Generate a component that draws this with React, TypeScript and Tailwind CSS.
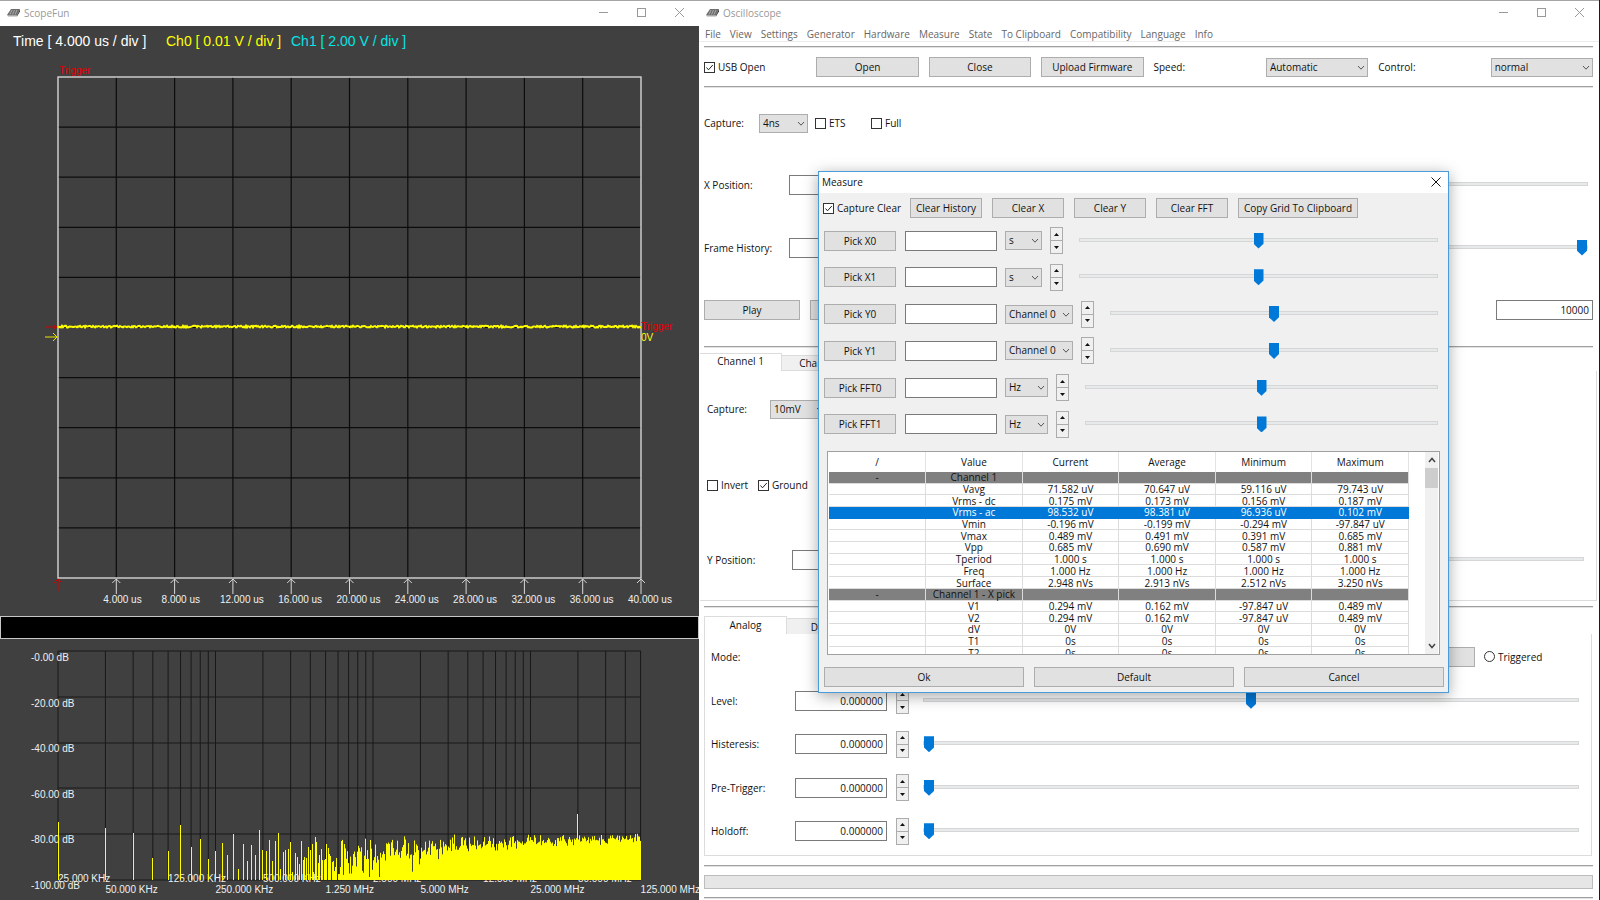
import type { ReactNode } from "react";

const MENU = ["File", "View", "Settings", "Generator", "Hardware", "Measure", "State", "To Clipboard", "Compatibility", "Language", "Info"];

const PICKS = [
  { name: "X0", units: ["s", "ms"], width: "w-[37px]" },
  { name: "X1", units: ["s", "ms"], width: "w-[37px]" },
  { name: "Y0", units: ["Channel 0", "Channel 1"], width: "w-[68px]" },
  { name: "Y1", units: ["Channel 0", "Channel 1"], width: "w-[68px]" },
  { name: "FFT0", units: ["Hz", "KHz"], width: "w-[43px]" },
  { name: "FFT1", units: ["Hz", "KHz"], width: "w-[43px]" },
];

const ROWS = [
  ["-", "Channel 1", "", "", "", ""],
  ["", "Vavg", "71.582 uV", "70.647 uV", "59.116 uV", "79.743 uV"],
  ["", "Vrms - dc", "0.175 mV", "0.173 mV", "0.156 mV", "0.187 mV"],
  ["", "Vrms - ac", "98.532 uV", "98.381 uV", "96.936 uV", "0.102 mV"],
  ["", "Vmin", "-0.196 mV", "-0.199 mV", "-0.294 mV", "-97.847 uV"],
  ["", "Vmax", "0.489 mV", "0.491 mV", "0.391 mV", "0.685 mV"],
  ["", "Vpp", "0.685 mV", "0.690 mV", "0.587 mV", "0.881 mV"],
  ["", "Tperiod", "1.000 s", "1.000 s", "1.000 s", "1.000 s"],
  ["", "Freq", "1.000 Hz", "1.000 Hz", "1.000 Hz", "1.000 Hz"],
  ["", "Surface", "2.948 nVs", "2.913 nVs", "2.512 nVs", "3.250 nVs"],
  ["-", "Channel 1 - X pick", "", "", "", ""],
  ["", "V1", "0.294 mV", "0.162 mV", "-97.847 uV", "0.489 mV"],
  ["", "V2", "0.294 mV", "0.162 mV", "-97.847 uV", "0.489 mV"],
  ["", "dV", "0V", "0V", "0V", "0V"],
  ["", "T1", "0s", "0s", "0s", "0s"],
  ["", "T2", "0s", "0s", "0s", "0s"],
];

const SELECTED_ROW = 3;

// pseudo random numbers with a fixed seed, so the noise is the same on every render
const makeRandom = (seed: number) => () => {
  seed = (seed * 1664525 + 1013904223) % 4294967296;
  return seed / 4294967296;
};

const LogoIcon = () => (
  <svg width="14" height="10" viewBox="0 0 14 10" aria-hidden="true">
    <path d="M4 1 L13 1 L10 7 L0 7 Z" fill="#6f6f6f" />
    <path d="M0 7 L10 7 L10 8.500 L1 8.500 Z" fill="#a9a9a9" />
    <path d="M10 7 L13 1 L13 3.500 L10 8.500 Z" fill="#3f3f3f" />
    <path d="M5 2 L3 6.500 M7.500 2 L5.500 6.500 M10 2 L8 6.500" stroke="#b9b9b9" strokeWidth="0.800" />
  </svg>
);

const TitleBar = ({ title }: { title: string }) => (
  <header className="flex h-[26px] items-center border-t border-[#a5a5a5] bg-white pb-[2px] pl-[7px] pr-[14px] text-[#999]">
    <LogoIcon />
    <h1 className="ml-[3px] flex-1">{title}</h1>
    <div className="flex gap-[27px]">
      <button aria-label="Minimize">
        <svg width="11" height="11" viewBox="0 0 11 11"><path d="M1 5.500H10" stroke="#999" /></svg>
      </button>
      <button aria-label="Maximize">
        <svg width="11" height="11" viewBox="0 0 11 11"><rect x="1.500" y="1.500" width="8" height="8" fill="none" stroke="#999" /></svg>
      </button>
      <button aria-label="Close">
        <svg width="11" height="11" viewBox="0 0 11 11"><path d="M1 1L10 10M10 1L1 10" stroke="#999" /></svg>
      </button>
    </div>
  </header>
);

const Button = ({ children, label, className = "" }: { children?: ReactNode; label?: string; className?: string }) => (
  <button aria-label={label} className={`h-5 border border-[#adadad] bg-[#e1e1e1] text-center leading-[16px] hover:border-[#0078d7] ${className}`}>
    {children}
  </button>
);

const Select = ({ label, options, className = "" }: { label: string; options: string[]; className?: string }) => (
  <span className={`relative block shrink-0 ${className}`}>
    <select aria-label={label} className="h-[19px] w-full appearance-none border border-[#adadad] bg-[#e1e1e1] pl-[3px] leading-[15px]">
      {options.map((o) => <option key={o}>{o}</option>)}
    </select>
    <svg className="pointer-events-none absolute right-[3px] top-[7px]" width="8" height="6" viewBox="0 0 8 6">
      <path d="M1 1L4 4.200L7 1" fill="none" stroke="#555" />
    </svg>
  </span>
);

const Checkbox = ({ label, checked = false }: { label: string; checked?: boolean }) => (
  <label className="flex items-center gap-[3px] whitespace-nowrap">
    <span className="relative block size-[11px]">
      <input type="checkbox" defaultChecked={checked} className="peer block size-[11px] appearance-none border border-[#333] bg-white" />
      <svg className="pointer-events-none absolute left-0 top-0 hidden peer-checked:block" width="11" height="11" viewBox="0 0 11 11">
        <path d="M2.500 5.500L4.500 7.800L8.800 3" fill="none" stroke="#222" />
      </svg>
    </span>
    {label}
  </label>
);

const TextBox = ({ label, value = "", className = "w-[92px]" }: { label: string; value?: string; className?: string }) => (
  <input
    type="text"
    aria-label={label}
    defaultValue={value}
    className={`h-5 shrink-0 border border-[#7a7a7a] bg-white pr-[3px] text-right leading-[16px] ${className}`}
  />
);

const SpinButtons = ({ label }: { label: string }) => (
  <span className="flex h-[27px] w-[13px] shrink-0 flex-col">
    <button aria-label={`${label} up`} className="flex h-[14px] items-center justify-center border border-[#acacac] bg-[#f0f0f0]">
      <svg width="5" height="3" viewBox="0 0 5 3"><path d="M0 3L2.500 0L5 3Z" fill="#111" /></svg>
    </button>
    <button aria-label={`${label} down`} className="flex h-[13px] items-center justify-center border border-t-0 border-[#acacac] bg-[#f0f0f0]">
      <svg width="5" height="3" viewBox="0 0 5 3"><path d="M0 0L2.500 3L5 0Z" fill="#111" /></svg>
    </button>
  </span>
);

const Slider = ({ label, value = 50 }: { label: string; value?: number }) => (
  <input
    type="range"
    aria-label={label}
    defaultValue={value}
    className="block h-4 min-w-0 flex-1 appearance-none bg-transparent pb-[2px] [&::-webkit-slider-runnable-track]:h-1 [&::-webkit-slider-runnable-track]:border [&::-webkit-slider-runnable-track]:border-[#d6d6d6] [&::-webkit-slider-runnable-track]:bg-[#e7eaea] [&::-webkit-slider-thumb]:-mt-[6px] [&::-webkit-slider-thumb]:h-4 [&::-webkit-slider-thumb]:w-[10px] [&::-webkit-slider-thumb]:appearance-none [&::-webkit-slider-thumb]:bg-[#0078d7] [&::-webkit-slider-thumb]:[clip-path:polygon(0_0,100%_0,100%_70%,50%_100%,0_70%)]"
  />
);

const Separator = () => <hr className="h-[2px] border-0 border-t border-[#a0a0a0] bg-[#e3e3e3]" />;

const PLOT_LEFT = 58;
const PLOT_RIGHT = 641;

const ScopePlot = () => {
  const random = makeRandom(7);
  const step = (PLOT_RIGHT - PLOT_LEFT) / 10;
  const ticks = Array.from({ length: 10 }, (_, i) => i + 1);
  let trace = "";
  for (let x = PLOT_LEFT; x <= PLOT_RIGHT; x++) {
    trace += `${x === PLOT_LEFT ? "M" : "L"}${x} ${(270.6 + (random() - 0.5) * 1.8).toFixed(1)}`;
  }
  return (
    <svg viewBox="0 0 699 560" className="block w-full" fontFamily="'Liberation Sans', Arial, sans-serif" fontSize="10">
      {ticks.slice(0, 9).map((i) => (
        <g key={i} stroke="#0c0c0c" strokeWidth="1.200">
          <path d={`M${PLOT_LEFT + i * step} 21V522`} />
          <path d={`M${PLOT_LEFT} ${21 + i * 50.1}H${PLOT_RIGHT}`} />
        </g>
      ))}
      <rect x={PLOT_LEFT} y="21" width={PLOT_RIGHT - PLOT_LEFT} height="501" fill="none" stroke="#d4d4d4" strokeWidth="1.400" />
      <path d={trace} fill="none" stroke="#ffff00" strokeWidth="2" />
      {ticks.map((i) => {
        const x = PLOT_LEFT + i * step;
        return (
          <g key={i}>
            <path d={`M${x} 538V523M${x - 4} 527L${x} 523L${x + 4} 527`} fill="none" stroke="#d8d8d8" />
            <text x={x - 13} y="547" fill="#f0f0f0">{`${i * 4}.000 us`}</text>
          </g>
        );
      })}
      <path d="M58 535V523M54 527L58 523L62 527" fill="none" stroke="#d00000" />
      <path d="M45 271H57M53 269L57 271L53 273" fill="none" stroke="#d00000" />
      <path d="M45 281H57M53 277L57 281L53 285" fill="none" stroke="#e6e600" />
      <text x="59" y="18" fill="#e00000">Trigger</text>
      <text x="641" y="274" fill="#e00000">Trigger</text>
      <text x="641" y="285" fill="#ffff00">0V</text>
    </svg>
  );
};

// tops of the first bins, counted from the top of the plot
const FIRST_BINS = [
  183, 189, 194, 219, 212, 186, 208, 200, 220, 212, 204, 216, 195, 230, 205, 222, 206, 216, 191, 211, 212, 201, 222, 202, 194,
  230, 213, 211, 210, 203, 233, 214, 218, 225, 202, 221, 218, 219, 208, 211, 205, 233, 198, 203, 224, 216, 210, 221, 221, 220,
  205, 209, 215, 217, 223, 222, 232, 228, 219, 235, 235, 228, 202,
];
const FFT_LABELS = [
  { bin: 1, text: "25.000 KHz" },
  { bin: 2, text: "50.000 KHz" },
  { bin: 5, text: "125.000 KHz" },
  { bin: 10, text: "250.000 KHz" },
  { bin: 20, text: "500.000 KHz" },
  { bin: 50, text: "1.250 MHz" },
  { bin: 100, text: "2.500 MHz" },
  { bin: 200, text: "5.000 MHz" },
  { bin: 500, text: "12.500 MHz" },
  { bin: 1000, text: "25.000 MHz" },
  { bin: 2000, text: "50.000 MHz" },
  { bin: 5000, text: "125.000 MHz" },
];
const binX = (n: number) => PLOT_LEFT + 157.5 * Math.log10(n);

const FftPlot = () => {
  const random = makeRandom(42);
  const columns = new Map<number, number>();
  for (let n = 1; n <= 5000; n++) {
    const level = Math.sqrt(-2 * Math.log(1 - random() * 0.9995));
    let top = FIRST_BINS[n - 1] ?? Math.min(238, 218 - 45.6 * Math.log10(level / 1.18 + 0.01));
    if (n === 2000) top = 175;
    const x = Math.floor(binX(n));
    columns.set(x, Math.min(columns.get(x) ?? 240, top));
  }
  let bars = "";
  columns.forEach((top, x) => {
    bars += `M${x + 0.5} 241V${top.toFixed(1)}`;
  });
  const lines: number[] = [];
  for (let decade = 1; decade <= 1000; decade *= 10) {
    for (let k = 1; k < 10 && k * decade <= 5000; k++) lines.push(k * decade);
  }
  return (
    <svg viewBox="0 0 699 261" className="block w-full" fontFamily="'Liberation Sans', Arial, sans-serif" fontSize="10" fill="#f0f0f0">
      <g stroke="#181818">
        {lines.map((n) => <path key={n} d={`M${binX(n)} 12V241`} />)}
        {[12, 58, 104, 149, 195, 241].map((y) => <path key={y} d={`M${PLOT_LEFT} ${y}H${PLOT_RIGHT}`} />)}
      </g>
      {[0, 20, 40, 60, 80, 100].map((db, i) => (
        <text key={db} x="31" y={Math.round(22 + i * 45.6)}>{`-${db}.00 dB`}</text>
      ))}
      {FFT_LABELS.map(({ bin, text }, i) => (
        <text key={bin} x={binX(bin)} y={i % 2 === 0 && i < 11 ? 243 : 254}>{text}</text>
      ))}
      <path d={bars} stroke="#ffff00" />
    </svg>
  );
};

const ScopeWindow = () => (
  <section className="flex flex-col bg-[#404040]">
    <TitleBar title="ScopeFun" />
    <div className="flex h-[30px] items-center pl-[13px] font-['Liberation_Sans',Arial,sans-serif] text-[14px]">
      <span className="w-[153px] text-white">Time [ 4.000 us / div ]</span>
      <span className="w-[125px] text-[#ffff00]">Ch0 [ 0.01 V / div ]</span>
      <span className="text-[#00e5e5]">Ch1 [ 2.00 V / div ]</span>
    </div>
    <ScopePlot />
    <div className="h-[23px] border border-[#c8c8c8] bg-black" />
    <FftPlot />
  </section>
);

const MeasureDialog = () => (
  <div
    role="dialog"
    aria-label="Measure"
    className="absolute left-[119px] top-[171px] flex w-[631px] flex-col border border-[#4a9bd9] bg-[#f0f0f0] shadow-[0_3px_14px_rgba(0,0,0,0.35)]"
  >
    <div className="flex h-[21px] items-center justify-between bg-white pb-px pl-[3px] pr-[7px]">
      <h2>Measure</h2>
      <button aria-label="Close">
        <svg width="10" height="10" viewBox="0 0 10 10"><path d="M0.500 0.500L9.500 9.500M9.500 0.500L0.500 9.500" stroke="#111" /></svg>
      </button>
    </div>
    <div className="flex h-[30px] items-center gap-[10px] pl-1">
      <div className="w-[77px]"><Checkbox label="Capture Clear" checked /></div>
      <Button className="w-[72px]">Clear History</Button>
      <Button className="w-[72px]">Clear X</Button>
      <Button className="w-[72px]">Clear Y</Button>
      <Button className="w-[72px]">Clear FFT</Button>
      <Button className="w-[120px]">Copy Grid To Clipboard</Button>
    </div>
    <div className="mt-1 flex h-[211px] flex-col justify-between pl-[5px] pr-[10px]">
      {PICKS.map((pick) => (
        <div key={pick.name} className="flex items-center">
          <Button className="w-[72px]">Pick {pick.name}</Button>
          <TextBox label={`${pick.name} value`} className="ml-[9px] mr-2 w-[92px]" />
          <Select label={`${pick.name} unit`} options={pick.units} className={pick.width} />
          <span className="ml-2 mr-4 flex"><SpinButtons label={pick.name} /></span>
          <Slider label={`${pick.name} position`} />
        </div>
      ))}
    </div>
    <div className="ml-2 mr-2 mt-[13px] flex h-[204px] justify-between overflow-hidden border border-[#a0a0a0] bg-white px-px">
      <table className="h-[207px] w-[580px] table-fixed border-collapse text-center leading-[10px]">
        <thead>
          <tr className="h-[20px]">
            {["/", "Value", "Current", "Average", "Minimum", "Maximum"].map((h) => (
              <th key={h} className="border-r border-[#e3e3e3] p-0 font-normal">{h}</th>
            ))}
          </tr>
        </thead>
        <tbody>
          {ROWS.map((row, i) => (
            <tr key={row[1]} className={row[0] ? "bg-[#808080]" : i === SELECTED_ROW ? "bg-[#0078d7] text-white" : ""}>
              {row.map((cell, j) => (
                <td
                  key={j}
                  className={`whitespace-nowrap border-b p-0 ${i === SELECTED_ROW ? "border-[#0078d7]" : "border-r border-[#dcdcdc]"}`}
                >
                  {cell}
                </td>
              ))}
            </tr>
          ))}
        </tbody>
      </table>
      <div className="flex w-[13px] flex-col items-center justify-between bg-[#f0f0f0] py-[5px]">
        <div className="flex w-full flex-col items-center gap-[5px]">
          <svg width="8" height="6" viewBox="0 0 8 6"><path d="M1 5L4 1.500L7 5" fill="none" stroke="#444" strokeWidth="1.500" /></svg>
          <div className="h-5 w-full bg-[#cdcdcd]" />
        </div>
        <svg width="8" height="6" viewBox="0 0 8 6"><path d="M1 1L4 4.500L7 1" fill="none" stroke="#444" strokeWidth="1.500" /></svg>
      </div>
    </div>
    <div className="mb-[5px] mt-3 grid grid-cols-3 gap-[10px] pl-[5px] pr-1">
      <Button>Ok</Button>
      <Button>Default</Button>
      <Button>Cancel</Button>
    </div>
  </div>
);

const TriggerRow = ({ label, value }: { label: string; value: number }) => (
  <div className="flex flex-1 items-center pr-[12px]">
    <span className="w-[84px]">{label}:</span>
    <TextBox label={label} value="0.000000" />
    <span className="ml-[9px] mr-[14px] flex"><SpinButtons label={label} /></span>
    <Slider label={`${label} position`} value={value} />
  </div>
);

const OscilloscopeWindow = () => (
  <section className="relative flex flex-col border-r border-[#111a2e] bg-white">
    <TitleBar title="Oscilloscope" />
    <nav className="flex h-4 items-center gap-[9px] border-b border-[#ececec] pl-[6px] text-[#666]">
      {MENU.map((item) => <button key={item} className="whitespace-nowrap">{item}</button>)}
    </nav>
    <div className="flex flex-col pl-[5px] pr-[6px] pt-1">
      <Separator />
      <div className="grid h-[38px] grid-cols-8 items-center gap-[10px]">
        <Checkbox label="USB Open" checked />
        <Button>Open</Button>
        <Button>Close</Button>
        <Button>Upload Firmware</Button>
        <span>Speed:</span>
        <Select label="Speed" options={["Automatic", "Manual"]} />
        <span>Control:</span>
        <Select label="Control" options={["normal", "advanced"]} />
      </div>
      <Separator />
      <div className="mt-1 flex h-[62px] items-center">
        <span className="w-[55px]">Capture:</span>
        <Select label="Sample time" options={["4ns", "8ns"]} className="w-[49px]" />
        <div className="ml-[7px] w-[56px]"><Checkbox label="ETS" /></div>
        <Checkbox label="Full" />
      </div>
      <div className="flex h-[62px] items-center gap-[10px] pr-[5px]">
        <span className="w-[75px]">X Position:</span>
        <TextBox label="X Position" />
        <Slider label="X Position slider" />
      </div>
      <div className="flex h-[63px] items-center gap-[10px] pr-[5px]">
        <span className="w-[75px]">Frame History:</span>
        <TextBox label="Frame History" />
        <Slider label="Frame History slider" value={100} />
      </div>
      <div className="flex h-[62px] items-center gap-[10px]">
        <Button className="w-[96px]">Play</Button>
        <Button label="Stop" className="w-[96px]" />
        <span className="flex-1" />
        <TextBox label="Frames" value="10000" className="w-[97px]" />
      </div>
      <div className="mt-[5px]"><Separator /></div>

      <div className="-mx-[4px] mt-[5px]">
        <div role="tablist" className="flex h-[18px] items-end">
          <button role="tab" aria-selected="true" className="h-[18px] w-[82px] border-r border-t border-[#dcdcdc] pb-1">Channel 1</button>
          <button role="tab" aria-selected="false" className="h-4 w-[82px] border border-l-0 border-[#dcdcdc] bg-[#f0f0f0]">Channel 2</button>
        </div>
        <div className="flex h-[230px] flex-col border-b border-r border-[#dcdcdc] pl-[7px]">
          <div className="flex h-[76px] items-center">
            <span className="w-[63px]">Capture:</span>
            <Select label="Channel capture" options={["10mV", "20mV"]} className="w-[57px]" />
          </div>
          <div className="flex h-[76px] items-center">
            <div className="w-[51px]"><Checkbox label="Invert" /></div>
            <Checkbox label="Ground" checked />
          </div>
          <div className="flex h-[74px] items-center gap-[10px] pr-[12px]">
            <span className="w-[75px]">Y Position:</span>
            <TextBox label="Y Position" />
            <Slider label="Y Position slider" />
          </div>
        </div>
      </div>
      <div className="mt-[5px]"><Separator /></div>

      <div role="tablist" className="mt-2 flex h-[18px] items-end">
        <button role="tab" aria-selected="true" className="h-[18px] w-[83px] border border-b-0 border-[#dcdcdc] pb-px">Analog</button>
        <button role="tab" aria-selected="false" className="h-4 w-[78px] border border-b-0 border-l-0 border-[#dcdcdc] bg-[#f0f0f0]">Digital</button>
      </div>
      <div className="mr-px flex h-[222px] flex-col border border-t-0 border-[#dcdcdc] pl-[6px]">
        <div className="flex h-[45px] items-center pr-[107px]">
          <span className="flex-1">Mode:</span>
          <Button label="Mode" className="w-[96px]" />
          <label className="ml-[9px] flex w-0 items-center gap-[3px]">
            <input type="radio" name="mode" className="size-[11px] shrink-0 appearance-none rounded-full border border-[#333]" />
            Triggered
          </label>
        </div>
        <div className="flex h-[174px] flex-col">
          <TriggerRow label="Level" value={50} />
          <TriggerRow label="Histeresis" value={0} />
          <TriggerRow label="Pre-Trigger" value={0} />
          <TriggerRow label="Holdoff" value={0} />
        </div>
      </div>
      <div className="mt-[9px]"><Separator /></div>
      <div role="progressbar" aria-label="Progress" className="my-2 h-[14px] border border-[#bcbcbc] bg-[#e6e6e6]" />
      <Separator />
    </div>
    <MeasureDialog />
  </section>
);

export default function App() {
  return (
    <main className="grid min-h-screen grid-cols-[699fr_901fr] overflow-hidden bg-white font-['Open_Sans','Noto_Sans',sans-serif] text-[10px] leading-[14px] text-[#111]">
      <ScopeWindow />
      <OscilloscopeWindow />
    </main>
  );
}
